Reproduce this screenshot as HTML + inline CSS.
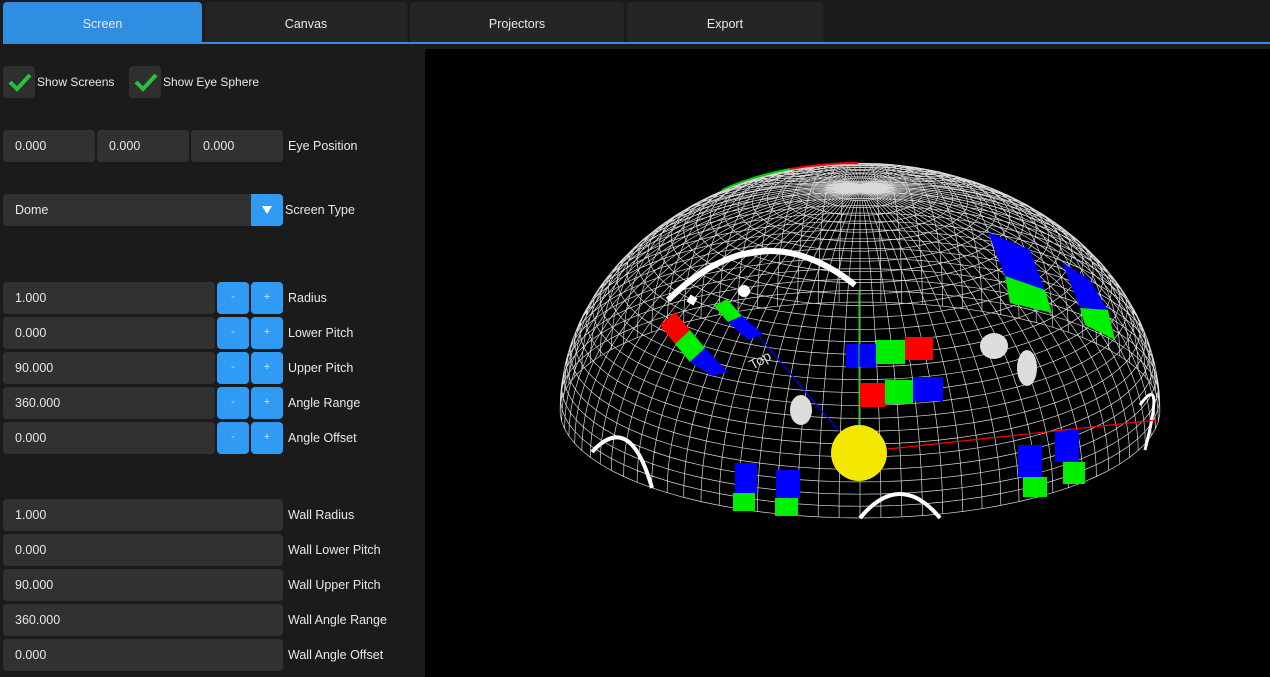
<!DOCTYPE html>
<html><head><meta charset="utf-8"><style>
*{box-sizing:border-box;margin:0;padding:0}
body{width:1270px;height:677px;background:#1b1b1b;font-family:"Liberation Sans",sans-serif;font-size:12px;color:#e8e8e8;position:relative;overflow:hidden}
.a{position:absolute}
.tab{position:absolute;top:2px;height:41px;background:#252525;border-radius:4px 4px 0 0;text-align:center;line-height:44px;font-size:12.5px}
.f{position:absolute;height:32px;background:#313131;border-radius:4px;padding-left:12px;line-height:32px;font-size:12.5px}
.b{position:absolute;height:32px;width:32px;background:#2f9bf5;border-radius:4px;text-align:center;line-height:31px;color:#cfe6fb;font-size:11px}
.l{position:absolute;left:288px;line-height:32px;font-size:12.5px}
.cb{position:absolute;width:32px;height:32px;background:#2f2f2f;border-radius:4px}
</style></head><body>
<div class="tab" style="left:3px;width:199px;background:#2f8de2">Screen</div>
<div class="tab" style="left:205px;width:202px">Canvas</div>
<div class="tab" style="left:410px;width:214px">Projectors</div>
<div class="tab" style="left:627px;width:196px">Export</div>
<div class="a" style="left:3px;top:42px;width:1267px;height:2px;background:#2f8de2"></div>
<div class="a" style="left:425px;top:49px;width:845px;height:628px;background:#000;border-radius:3px 0 0 0"></div>

<div class="cb" style="left:3px;top:66px"></div>
<svg class="a" style="left:3px;top:66px" width="32" height="32"><path d="M7 16 L14 23 L27 9" stroke="#27c23c" stroke-width="4" fill="none"/></svg>
<div class="a" style="left:37px;top:66px;line-height:32px">Show Screens</div>
<div class="cb" style="left:129px;top:66px"></div>
<svg class="a" style="left:129px;top:66px" width="32" height="32"><path d="M7 16 L14 23 L27 9" stroke="#27c23c" stroke-width="4" fill="none"/></svg>
<div class="a" style="left:163px;top:66px;line-height:32px">Show Eye Sphere</div>

<div class="f" style="left:3px;top:130px;width:92px">0.000</div>
<div class="f" style="left:97px;top:130px;width:92px">0.000</div>
<div class="f" style="left:191px;top:130px;width:92px">0.000</div>
<div class="l" style="top:130px">Eye Position</div>

<div class="f" style="left:3px;top:194px;width:280px">Dome</div>
<div class="a" style="left:251px;top:194px;width:32px;height:32px;background:#2f9bf5;border-radius:0 4px 4px 0"></div>
<svg class="a" style="left:251px;top:194px" width="32" height="32"><path d="M11 12 L21 12 L16 20Z" fill="#fff"/></svg>
<div class="l" style="top:194px;left:285px">Screen Type</div>

<div class="f" style="left:3px;top:282px;width:212px">1.000</div><div class="b" style="left:217px;top:282px">-</div><div class="b" style="left:251px;top:282px">+</div><div class="l" style="top:282px">Radius</div>
<div class="f" style="left:3px;top:317px;width:212px">0.000</div><div class="b" style="left:217px;top:317px">-</div><div class="b" style="left:251px;top:317px">+</div><div class="l" style="top:317px">Lower Pitch</div>
<div class="f" style="left:3px;top:352px;width:212px">90.000</div><div class="b" style="left:217px;top:352px">-</div><div class="b" style="left:251px;top:352px">+</div><div class="l" style="top:352px">Upper Pitch</div>
<div class="f" style="left:3px;top:387px;width:212px">360.000</div><div class="b" style="left:217px;top:387px">-</div><div class="b" style="left:251px;top:387px">+</div><div class="l" style="top:387px">Angle Range</div>
<div class="f" style="left:3px;top:422px;width:212px">0.000</div><div class="b" style="left:217px;top:422px">-</div><div class="b" style="left:251px;top:422px">+</div><div class="l" style="top:422px">Angle Offset</div>

<div class="f" style="left:3px;top:499px;width:280px">1.000</div><div class="l" style="top:499px">Wall Radius</div>
<div class="f" style="left:3px;top:534px;width:280px">0.000</div><div class="l" style="top:534px">Wall Lower Pitch</div>
<div class="f" style="left:3px;top:569px;width:280px">90.000</div><div class="l" style="top:569px">Wall Upper Pitch</div>
<div class="f" style="left:3px;top:604px;width:280px">360.000</div><div class="l" style="top:604px">Wall Angle Range</div>
<div class="f" style="left:3px;top:639px;width:280px">0.000</div><div class="l" style="top:639px">Wall Angle Offset</div>

<svg id="v" class="a" style="left:0;top:0" width="1270" height="677">
<g id="g" stroke="#fff" stroke-width="0.7" fill="none" opacity="0.85"></g>
<g>
<path d="M668 300 Q760 210 855 285" stroke="#fff" stroke-width="6" fill="none"/>
<path d="M592 452 Q630 410 652 488" stroke="#fff" stroke-width="4" fill="none"/>
<path d="M860 518 Q900 470 940 518" stroke="#fff" stroke-width="4" fill="none"/>
<path d="M1140 405 Q1165 370 1145 450" stroke="#fff" stroke-width="3" fill="none"/>
<ellipse cx="994" cy="346" rx="14" ry="13" fill="#ddd"/>
<ellipse cx="1027" cy="368" rx="10" ry="18" fill="#ddd"/>
<ellipse cx="801" cy="410" rx="11" ry="15" fill="#ddd"/>
<circle cx="744" cy="291" r="6" fill="#fff"/>
<rect x="688" y="296" width="8" height="8" fill="#fff" transform="rotate(30 692 300)"/>
<polygon points="660,325 675,312 690,330 675,344" fill="#f00"/>
<polygon points="675,344 690,330 705,348 690,362" fill="#0e0"/>
<polygon points="690,362 705,348 728,372 712,376" fill="#00f"/>
<polygon points="714,306 727,299 742,316 728,322" fill="#0e0"/>
<polygon points="728,322 742,316 763,334 748,340" fill="#00f"/>
<rect x="846" y="344" width="30" height="23" fill="#00f"/><rect x="876" y="340" width="29" height="24" fill="#0e0"/><rect x="905" y="337" width="28" height="23" fill="#f00"/>
<rect x="860" y="383" width="25" height="24" fill="#f00"/><rect x="885" y="380" width="28" height="24" fill="#0e0"/><rect x="913" y="377" width="30" height="24" fill="#00f"/>
<polygon points="988,232 1030,250 1045,290 1005,276" fill="#00f"/>
<polygon points="1005,276 1045,290 1052,313 1010,303" fill="#0e0"/>
<polygon points="1062,262 1090,280 1108,310 1080,308" fill="#00f"/>
<polygon points="1080,308 1108,310 1115,340 1085,325" fill="#0e0"/>
<rect x="735" y="463" width="22" height="30" fill="#00f"/><rect x="733" y="493" width="22" height="18" fill="#0e0"/>
<rect x="776" y="470" width="24" height="28" fill="#00f"/><rect x="775" y="498" width="23" height="18" fill="#0e0"/>
<rect x="1018" y="445" width="24" height="32" fill="#00f"/><rect x="1023" y="477" width="24" height="20" fill="#0e0"/>
<rect x="1055" y="430" width="24" height="32" fill="#00f"/><rect x="1063" y="462" width="22" height="22" fill="#0e0"/>
<line x1="859" y1="290" x2="859" y2="453" stroke="#0c0" stroke-width="1.2"/>
<line x1="745" y1="320" x2="855" y2="450" stroke="#00f" stroke-width="1.2"/>
<line x1="888" y1="449" x2="1157" y2="420" stroke="#f00" stroke-width="1.2"/>
<path d="M790 169 Q825 163 858 163" stroke="#f00" stroke-width="2" fill="none"/>
<path d="M722 190 Q752 176 790 169" stroke="#0c0" stroke-width="2" fill="none"/>
<circle cx="859" cy="453" r="28" fill="#f5e800"/>
<text x="750" y="360" fill="#ddd" font-size="14" transform="rotate(-30 770 360)" font-family="Liberation Sans, sans-serif">Top</text>
</g>
</svg>
<script>
(function(){
var g=document.getElementById('g'),cx=860,cy=410,R=300,ry=108,H=222,d='';
function P(az,el){var a=az*Math.PI/180,e=el*Math.PI/180;return [cx+R*Math.cos(e)*Math.sin(a),cy+ry*Math.cos(e)*Math.cos(a)-H*Math.sin(e)];}
for(var az=0;az<360;az+=4){d+='M';for(var el=0;el<=90;el+=3){var p=P(az,el);d+=(el?'L':'')+p[0].toFixed(1)+' '+p[1].toFixed(1)+' ';}}
for(var el=0;el<90;el+=3){d+='M';for(var az=0;az<=360;az+=4){var p=P(az,el);d+=(az?'L':'')+p[0].toFixed(1)+' '+p[1].toFixed(1)+' ';}}
var pa=document.createElementNS('http://www.w3.org/2000/svg','path');pa.setAttribute('d',d);g.appendChild(pa);
})();
</script>
</body></html>
